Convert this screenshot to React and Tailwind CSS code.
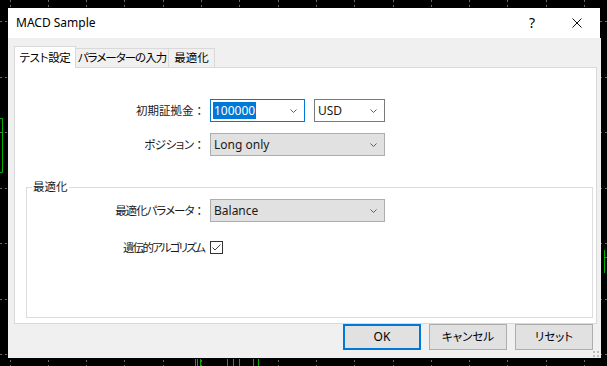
import React from "react";

const Chevron = () => (
  <svg width="7" height="4" viewBox="0 0 7 4" className="shrink-0">
    <path d="M0.5 0.5 L3.5 3.5 L6.5 0.5" fill="none" stroke="#5f5f5f" strokeWidth="1" />
  </svg>
);

const Colon = () => <span className="[font-feature-settings:normal] tracking-normal">：</span>;

function Background() {
  const xs = [];
  for (let k = 0; k < 16; k++) xs.push(9.5 + 38.3 * k);
  const ys = [];
  for (let k = 0; k < 7; k++) ys.push(21 + 55.5 * k);
  const greenBottom = [195, 197, 200, 227, 233, 239, 253, 258];
  return (
    <svg className="absolute inset-0" width="607" height="366" viewBox="0 0 607 366">
      {xs.map((x, i) => (
        <line key={"v" + i} x1={Math.round(x) + 0.5} y1="0" x2={Math.round(x) + 0.5} y2="366" stroke="#6a6a6a" strokeDasharray="2 3" />
      ))}
      {ys.map((y, i) => (
        <line key={"h" + i} x1="0" y1={Math.round(y) + 0.5} x2="607" y2={Math.round(y) + 0.5} stroke="#6a6a6a" strokeDasharray="2 3" />
      ))}
      <path d="M0 118.5 H2.5 V172.5 H0" fill="none" stroke="#00b000" />
      <path d="M604.5 250 V273 M604.5 257.5 H607" fill="none" stroke="#00b000" />
      {greenBottom.map((x, i) => (
        <line key={"g" + i} x1={x + 0.5} y1="359" x2={x + 0.5} y2="366" stroke="#00b000" />
      ))}
    </svg>
  );
}

export default function App() {
  const font = "[font-family:'Noto_Sans','Noto_Sans_CJK_JP',sans-serif]";
  return (
    <div className={`relative w-[607px] h-[366px] bg-black overflow-hidden ${font} text-[12px] text-[#1a1a1a] [font-feature-settings:'palt']`}>
      <Background />
      <div className="absolute left-[8px] top-[8px] w-[593px] h-[350px] flex flex-col">
        {/* title bar */}
        <div className="h-[30px] w-[592px] bg-white flex items-center pl-[8px] pr-[18px] shrink-0">
          <span className="flex-1 text-black text-[12px]">MACD Sample</span>
          <span className="text-[14px] text-black leading-none">?</span>
          <svg width="10" height="10" viewBox="0 0 10 10" className="ml-[37px]">
            <path d="M0.5 0.5 L9.5 9.5 M9.5 0.5 L0.5 9.5" stroke="#111" strokeWidth="1" fill="none" />
          </svg>
        </div>
        {/* body */}
        <div className="relative flex-1 bg-[#f0f0f0] pl-[6px] pt-[8px] flex flex-col">
          {/* tabs */}
          <div className="flex items-end h-[21px] whitespace-nowrap text-[11.5px]">
            <div className="relative z-10 -mb-px h-[22px] w-[62px] bg-white border border-b-0 border-[#d9d9d9] flex items-center justify-center text-black tracking-[-0.3px]">
              テスト設定
            </div>
            <div className="h-[19px] w-[93px] bg-[#f0f0f0] border border-l-0 border-b-0 border-[#d9d9d9] flex items-center justify-center text-black tracking-[-1px]">
              パラメーターの入力
            </div>
            <div className="h-[19px] w-[46px] bg-[#f0f0f0] border border-l-0 border-b-0 border-[#d9d9d9] flex items-center justify-center text-black">
              最適化
            </div>
          </div>
          {/* panel */}
          <div className="w-[583px] h-[257px] bg-white border border-[#d9d9d9] pt-[31px] flex flex-col">
            <div className="grid grid-cols-[190px_auto] gap-x-[5px] gap-y-[11px] items-center">
              <div className="text-right whitespace-nowrap text-[11.5px]">初期証拠金<Colon /></div>
              <div className="flex gap-[9px]">
                <div className="h-[23px] w-[95px] bg-white border border-[#0078d7] flex items-center pl-[2px] pr-[7px]">
                  <span className="flex-1 flex">
                    <span className="bg-[#0078d7] text-white h-[17px] leading-[17px] px-[1px]">100000</span>
                  </span>
                  <Chevron />
                </div>
                <div className="h-[23px] w-[71px] bg-white border border-[#7a7a7a] flex items-center pl-[3px] pr-[7px]">
                  <span className="flex-1">USD</span>
                  <Chevron />
                </div>
              </div>
              <div className="text-right whitespace-nowrap text-[11.5px] tracking-[-0.5px]">ポジション<Colon /></div>
              <div className="h-[23px] w-[175px] bg-[#e1e1e1] border border-[#adadad] flex items-center pl-[3px] pr-[7px]">
                <span className="flex-1">Long only</span>
                <Chevron />
              </div>
            </div>
            {/* group box */}
            <fieldset className="mt-[23px] ml-[11px] w-[567px] h-[139px] border border-[#dcdcdc]">
              <legend className="ml-[5px] px-[1px] leading-[16px] text-[11.5px]">最適化</legend>
              <div className="pt-[4px] grid grid-cols-[178px_auto] gap-x-[5px] gap-y-[14px] items-center">
                <div className="text-right whitespace-nowrap text-[11.5px] tracking-[-1px]">最適化パラメータ<Colon /></div>
                <div className="h-[23px] w-[175px] bg-[#e1e1e1] border border-[#adadad] flex items-center pl-[3px] pr-[7px]">
                  <span className="flex-1">Balance</span>
                  <Chevron />
                </div>
                <div className="h-[23px] flex items-center justify-end pr-[1px] whitespace-nowrap text-[11.5px] tracking-[-1.8px]">遺伝的アルゴリズム</div>
                <div className="h-[23px] flex items-center">
                  <div className="w-[13px] h-[13px] bg-white border border-[#333] flex items-center justify-center">
                    <svg width="9" height="7" viewBox="0 0 9 7">
                      <path d="M0.5 3.5 L3 6 L8.5 0.5" fill="none" stroke="#444" strokeWidth="1" />
                    </svg>
                  </div>
                </div>
              </div>
            </fieldset>
          </div>
          {/* buttons */}
          <div className="flex justify-end gap-[8px] pr-[8px]">
            <button className="w-[78px] h-[26px] bg-[#e1e1e1] border-2 border-[#0078d7] text-black">OK</button>
            <button className="w-[78px] h-[26px] bg-[#e1e1e1] border border-[#adadad] text-black text-[11.5px]">キャンセル</button>
            <button className="w-[78px] h-[26px] bg-[#e1e1e1] border border-[#adadad] text-black text-[11.5px]">リセット</button>
          </div>
          <svg className="absolute right-[2px] bottom-[1px]" width="6" height="6" viewBox="0 0 6 6">
            <rect x="0" y="0" width="2" height="2" fill="#bdbdbd" />
            <rect x="4" y="0" width="2" height="2" fill="#bdbdbd" />
            <rect x="0" y="4" width="2" height="2" fill="#bdbdbd" />
            <rect x="4" y="4" width="2" height="2" fill="#bdbdbd" />
          </svg>
        </div>
      </div>
    </div>
  );
}
